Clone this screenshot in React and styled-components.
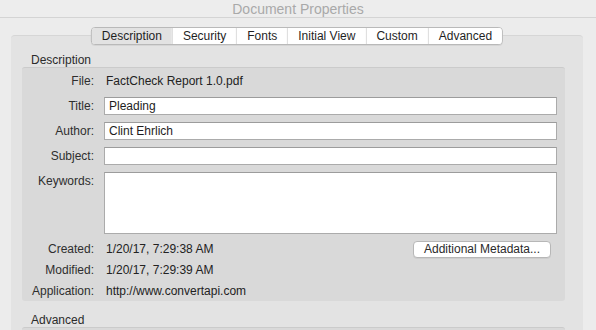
import styled, { createGlobalStyle } from 'styled-components';

const GlobalStyle = createGlobalStyle`
  html, body {
    margin: 0;
    padding: 0;
    background: #ececec;
  }
  body {
    font-family: "Liberation Sans", Arial, sans-serif;
    font-size: 12px;
    color: #222;
  }
`;

const Window = styled.div`
  width: 596px;
  height: 330px;
  overflow: hidden;
  background: #ececec;
  display: flex;
  flex-direction: column;
`;

const TitleBar = styled.div`
  height: 17px;
  flex-shrink: 0;
  border-bottom: 1px solid #d4d4d4;
  background: #ededed;
  display: flex;
  align-items: center;
  justify-content: center;
  font-size: 14px;
  color: #a9a9a9;
`;

const Body = styled.div`
  padding: 17px 13px 0 11px;
`;

const Panel = styled.div`
  position: relative;
  height: 400px;
  background: #e3e3e3;
  border-top: 1px solid #d6d6d6;
  border-radius: 4px;
  padding: 17px 18px 0 11px;
`;

const Tabs = styled.div`
  position: absolute;
  top: -9px;
  left: 50%;
  transform: translateX(-50%);
  display: flex;
  height: 16px;
  border: 1px solid #b9b9b9;
  border-radius: 4px;
  background: #fff;
  overflow: hidden;
  box-shadow: 0 1px 0 rgba(0, 0, 0, 0.06);
`;

const Tab = styled.div`
  padding: 0 10px;
  line-height: 16px;
  white-space: nowrap;
  color: #1f1f1f;
  background: ${({ $active }) => ($active ? '#e2e2e2' : '#fff')};
  & + & {
    border-left: 1px solid #dcdcdc;
  }
`;

const SectionLabel = styled.div`
  height: 14px;
  line-height: 14px;
  padding-left: 9px;
  color: #2b2b2b;
`;

const Box = styled.div`
  background: #d9d9d9;
  border-top: 1px solid #cbcbcb;
  border-radius: 3px;
  padding: 4px 8px 1px 0;
  height: ${({ $height }) => $height || 'auto'};
`;

const Row = styled.div`
  display: flex;
  align-items: ${({ $top }) => ($top ? 'flex-start' : 'center')};
  min-height: 18px;
  margin-top: ${({ $gap }) => $gap ?? 7}px;
`;

const Label = styled.div`
  width: 72px;
  flex-shrink: 0;
  text-align: right;
  color: #2e2e2e;
  line-height: 18px;
`;

const Value = styled.div`
  flex: 1;
  margin-left: 12px;
  color: #222;
  line-height: 18px;
`;

const Input = styled.div`
  flex: 1;
  margin-left: 10px;
  height: ${({ $height }) => $height || 16}px;
  border: 1px solid #ababab;
  border-top-color: #9c9c9c;
  background: #fff;
  padding-left: 4px;
  line-height: 16px;
  color: #1d1d1d;
`;

const Button = styled.div`
  margin-left: auto;
  margin-right: 6px;
  width: 136px;
  height: 15px;
  border: 1px solid #b7b7b7;
  border-radius: 4px;
  background: #fff;
  text-align: center;
  line-height: 15px;
  color: #2a2a2a;
  box-shadow: 0 1px 0 rgba(0, 0, 0, 0.05);
`;

const AdvancedLabel = styled(SectionLabel)`
  margin-top: 12px;
`;

const App = () => (
  <Window>
    <GlobalStyle />
    <TitleBar>Document Properties</TitleBar>
    <Body>
      <Panel>
        <Tabs>
          <Tab $active>Description</Tab>
          <Tab>Security</Tab>
          <Tab>Fonts</Tab>
          <Tab>Initial View</Tab>
          <Tab>Custom</Tab>
          <Tab>Advanced</Tab>
        </Tabs>
        <SectionLabel>Description</SectionLabel>
        <Box>
          <Row $gap={0}>
            <Label>File:</Label>
            <Value>FactCheck Report 1.0.pdf</Value>
          </Row>
          <Row>
            <Label>Title:</Label>
            <Input>Pleading</Input>
          </Row>
          <Row>
            <Label>Author:</Label>
            <Input>Clint Ehrlich</Input>
          </Row>
          <Row>
            <Label>Subject:</Label>
            <Input />
          </Row>
          <Row $top>
            <Label>Keywords:</Label>
            <Input $height={60} />
          </Row>
          <Row $gap={6}>
            <Label>Created:</Label>
            <Value>1/20/17, 7:29:38 AM</Value>
            <Button>Additional Metadata...</Button>
          </Row>
          <Row $gap={3}>
            <Label>Modified:</Label>
            <Value>1/20/17, 7:29:39 AM</Value>
          </Row>
          <Row $gap={3}>
            <Label>Application:</Label>
            <Value>http://www.convertapi.com</Value>
          </Row>
        </Box>
        <AdvancedLabel>Advanced</AdvancedLabel>
        <Box $height="60px" />
      </Panel>
    </Body>
  </Window>
);

export default App;
